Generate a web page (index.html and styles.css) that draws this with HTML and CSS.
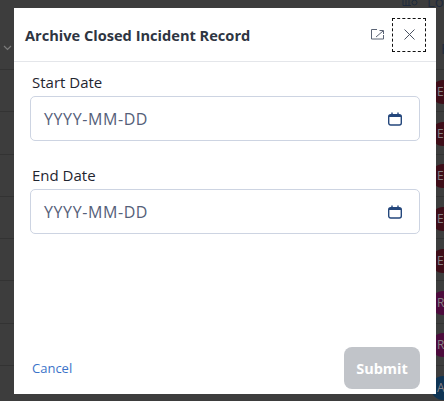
FILE: index.html
```html
<!DOCTYPE html>
<html lang="en">

<head>
    <meta charset="UTF-8">
    <title>Archive Closed Incident Record</title>
    <link rel="stylesheet" href="styles.css">
</head>

<body>
    <div class="page">
        <div class="top-bar">
            <svg width="16" height="8" viewBox="0 0 16 8" fill="none" stroke="#1f2a3c" stroke-width="1"><path d="M1 0v6.500h8M4 0v6.500M7 0v6.500"/><circle cx="12.500" cy="3.500" r="2.500"/></svg>
            <span>Lo</span>
        </div>
        <div class="table-head">
            <svg class="chevron" width="9" height="6" viewBox="0 0 9 6" fill="none" stroke="#7c7c7c" stroke-width="1.200"><path d="M1 1l3.500 3.500L8 1"/></svg>
            <span class="head-letter">F</span>
        </div>
        <div class="row"><span class="pill maroon">ES</span></div>
        <div class="row"><span class="pill maroon">ES</span></div>
        <div class="row"><span class="pill maroon">ES</span></div>
        <div class="row"><span class="pill maroon">ES</span></div>
        <div class="row"><span class="pill maroon">ES</span></div>
        <div class="row"><span class="pill purple">RI</span></div>
        <div class="row"><span class="pill purple">RI</span></div>
        <div class="row"><span class="pill navy">AI</span></div>
    </div>

    <div class="modal">
        <div class="modal-header">
            <h1>Archive Closed Incident Record</h1>
            <button class="icon-btn expand-btn" aria-label="Expand">
                <svg width="13" height="11" viewBox="0 0 13 11" fill="none" stroke="#5b6475" stroke-width="1"><path d="M6 .5H.5v9.500h12V6"/><path d="M5 8l7-6M8.500 1.500h4V5"/></svg>
            </button>
            <button class="icon-btn close-btn" aria-label="Close">
                <svg width="11" height="11" viewBox="0 0 11 11" fill="none" stroke="#4a5262" stroke-width="1"><path d="M.5 .5l10 10M10.500 .5l-10 10"/></svg>
            </button>
        </div>

        <div class="modal-body">
            <div class="field">
                <label>Start Date</label>
                <div class="date-input">
                    <span>YYYY-MM-DD</span>
                    <svg width="14" height="14" viewBox="0 0 14 14" fill="none" stroke="#24477c" stroke-width="1.400"><rect x=".7" y="2.700" width="12.600" height="10.300" rx="2"/><path d="M1 4h12" stroke-width="2"/><path d="M4 .5v2M10 .5v2"/></svg>
                </div>
            </div>
            <div class="field">
                <label>End Date</label>
                <div class="date-input">
                    <span>YYYY-MM-DD</span>
                    <svg width="14" height="14" viewBox="0 0 14 14" fill="none" stroke="#24477c" stroke-width="1.400"><rect x=".7" y="2.700" width="12.600" height="10.300" rx="2"/><path d="M1 4h12" stroke-width="2"/><path d="M4 .5v2M10 .5v2"/></svg>
                </div>
            </div>
        </div>

        <div class="modal-footer">
            <a class="cancel">Cancel</a>
            <button class="submit" disabled>Submit</button>
        </div>
    </div>
</body>

</html>
```

FILE: styles.css
```css
* {
    box-sizing: border-box;
}

html, body {
    height: 100%;
}

body {
    margin: 0;
    font-family: 'Open Sans', Arial, sans-serif;
    background-color: #3d3d3d;
    overflow: hidden;
}

/* dimmed page behind the modal */
.page {
    height: 401px;
    overflow: hidden;
}

.top-bar {
    height: 8px;
    display: flex;
    justify-content: flex-end;
    align-items: flex-end;
    gap: 9px;
    overflow: hidden;
    color: #1f2a3c;
    font-size: 15px;
    line-height: 14px;
}

.top-bar svg {
    margin-bottom: 1px;
}

.top-bar span {
    width: 17px;
    flex-shrink: 0;
    white-space: nowrap;
}

.table-head {
    height: 62px;
    display: flex;
    justify-content: space-between;
    align-items: center;
    padding: 18px 0 0 3px;
    border-bottom: 1px solid #333333;
}

.head-letter {
    width: 3px;
    overflow: hidden;
    font-size: 15px;
    color: #1f2a3c;
}

.row {
    height: 42.300px;
    display: flex;
    align-items: center;
    padding: 2px 0 0 431px;
    border-bottom: 1px solid #333333;
}

.pill {
    width: 40px;
    height: 24px;
    flex-shrink: 0;
    border-radius: 12px;
    padding-left: 6px;
    font-size: 12px;
    line-height: 24px;
    color: #858085;
}

.maroon {
    background-color: #3e0d18;
}

.purple {
    background-color: #4c0a3c;
}

.navy {
    background-color: #0f3454;
}

/* modal */
.modal {
    position: absolute;
    top: 8px;
    left: 14px;
    width: 422px;
    height: 386px;
    background-color: #ffffff;
    display: flex;
    flex-direction: column;
}

.modal-header {
    height: 54px;
    flex-shrink: 0;
    display: flex;
    align-items: center;
    padding: 0 10px 0 11px;
    border-bottom: 1px solid #e4e6ea;
}

.modal-header h1 {
    flex: 1;
    margin: 0;
    font-size: 14.600px;
    font-weight: 700;
    color: #2e3542;
}

.icon-btn {
    height: 34px;
    display: flex;
    align-items: center;
    justify-content: center;
    padding: 0;
    background: none;
    border: none;
}

.expand-btn {
    width: 30px;
}

.close-btn {
    width: 34px;
    border: 1px dashed #111111;
}

.modal-body {
    flex: 1;
    padding: 10px 16px 0;
}

.field {
    margin-bottom: 24px;
}

.field label {
    display: block;
    font-size: 15px;
    color: #1f2530;
    line-height: 20px;
    margin-bottom: 4px;
    margin-left: 2px;
}

.date-input {
    height: 45px;
    display: flex;
    align-items: center;
    justify-content: space-between;
    padding: 0 17px 0 13px;
    border: 1px solid #cdd4e2;
    border-radius: 5px;
}

.date-input span {
    font-size: 16px;
    letter-spacing: 0.600px;
    color: #556079;
}

.modal-footer {
    display: flex;
    align-items: center;
    justify-content: space-between;
    padding: 0 16px 5px 18px;
}

.cancel {
    font-size: 13px;
    color: #3b73c9;
}

.submit {
    width: 76px;
    height: 42px;
    border: none;
    border-radius: 8px;
    background-color: #c1c4c9;
    color: #ffffff;
    font-family: inherit;
    font-size: 14.500px;
    font-weight: 700;
}
```
